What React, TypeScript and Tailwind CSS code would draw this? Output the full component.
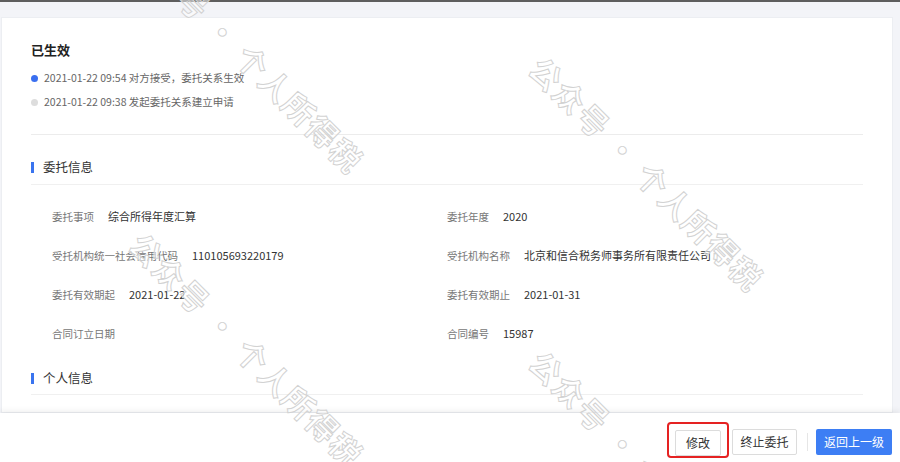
import React from 'react';

const rows: [string, string, string, string][] = [
  ['委托事项', '综合所得年度汇算', '委托年度', '2020'],
  ['受托机构统一社会信用代码', '110105693220179', '受托机构名称', '北京和信合税务师事务所有限责任公司'],
  ['委托有效期起', '2021-01-22', '委托有效期止', '2021-01-31'],
  ['合同订立日期', '', '合同编号', '15987'],
];

const marks = [
  { left: 152, top: -72 },
  { left: 152, top: 222 },
  { left: 552, top: 46 },
  { left: 552, top: 340 },
];

const SectionTitle: React.FC<{ title: string }> = ({ title }) => (
  <div className="flex items-center h-[18px] gap-[9px]">
    <span className="w-[3px] h-[11px] bg-[#3a74ef]" />
    <span className="text-[12.5px] text-[#333]">{title}</span>
  </div>
);

const Field: React.FC<{ label: string; value: string }> = ({ label, value }) => (
  <div className="flex items-center gap-[14px]">
    <span className="text-[10.5px] text-[#777]">{label}</span>
    {value && <span className="text-[11px] text-[#333]">{value}</span>}
  </div>
);

export default function App() {
  return (
    <div className="relative w-[900px] h-[462px] overflow-hidden bg-[#f3f4f8] font-['Noto_Sans_CJK_SC',sans-serif]">
      <div className="h-[2px] bg-[#5e5e5e]" />
      <div className="pt-[15px] pl-[1px] pr-[7px]">
        <div className="h-[396px] bg-white border border-[#eceef2] px-[29px] pt-[23px]">
          <div className="text-[13px] leading-[18px] font-bold text-[#222]">已生效</div>
          <div className="mt-[10px] flex flex-col gap-[6px]">
            <div className="flex items-center h-[18px] gap-[6px]">
              <span className="w-[7px] h-[7px] rounded-full bg-[#3a6ff0]" />
              <span className="text-[10.5px] text-[#666]">2021-01-22 09:54 对方接受，委托关系生效</span>
            </div>
            <div className="flex items-center h-[18px] gap-[6px]">
              <span className="w-[7px] h-[7px] rounded-full bg-[#dddddd]" />
              <span className="text-[10.5px] text-[#666]">2021-01-22 09:38 发起委托关系建立申请</span>
            </div>
          </div>
          <div className="mt-[23px] border-t border-[#ececec]" />

          <div className="mt-[23px]">
            <SectionTitle title="委托信息" />
          </div>
          <div className="mt-[8px] border-t border-[#f0f0f0]" />
          <div className="mt-[12px] px-[21px] grid grid-cols-2">
            {rows.map(([l1, v1, l2, v2]) => (
              <React.Fragment key={l1}>
                <div className="h-[39px] flex items-center">
                  <Field label={l1} value={v1} />
                </div>
                <div className="h-[39px] flex items-center">
                  <Field label={l2} value={v2} />
                </div>
              </React.Fragment>
            ))}
          </div>

          <div className="mt-[16px]">
            <SectionTitle title="个人信息" />
          </div>
          <div className="mt-[7px] border-t border-[#f0f0f0]" />
        </div>
      </div>

      <div className="h-[49px] bg-white shadow-[0_-2px_6px_rgba(0,0,0,0.07)] flex justify-end items-start pt-[16px] pr-[8px]">
        <div className="relative">
          <button className="w-[46px] h-[26px] border border-[#dcdcdc] rounded-[2px] bg-white text-[12px] text-[#333]">
            修改
          </button>
          <span className="absolute -left-[8px] -top-[7px] w-[62px] h-[36px] border-2 border-[#e52222] rounded-[4px]" />
        </div>
        <button className="ml-[11px] w-[65px] h-[26px] border border-[#dcdcdc] rounded-[2px] bg-white text-[12px] text-[#333]">
          终止委托
        </button>
        <span className="ml-[10px] mt-[4px] w-px h-[18px] bg-[#e6e6e6]" />
        <button className="ml-[8px] w-[76px] h-[26px] rounded-[2px] bg-[#3d7ef4] text-[12px] text-white">
          返回上一级
        </button>
      </div>

      {/* watermark */}
      {marks.map((m, i) => (
        <div
          key={i}
          className="pointer-events-none absolute origin-top-left rotate-45 whitespace-nowrap text-[31px] font-bold tracking-[2px] text-white/50 [-webkit-text-stroke:1px_#d2d2d2]"
          style={{ left: m.left, top: m.top }}
        >
          公众号 · 个人所得税
        </div>
      ))}
    </div>
  );
}
